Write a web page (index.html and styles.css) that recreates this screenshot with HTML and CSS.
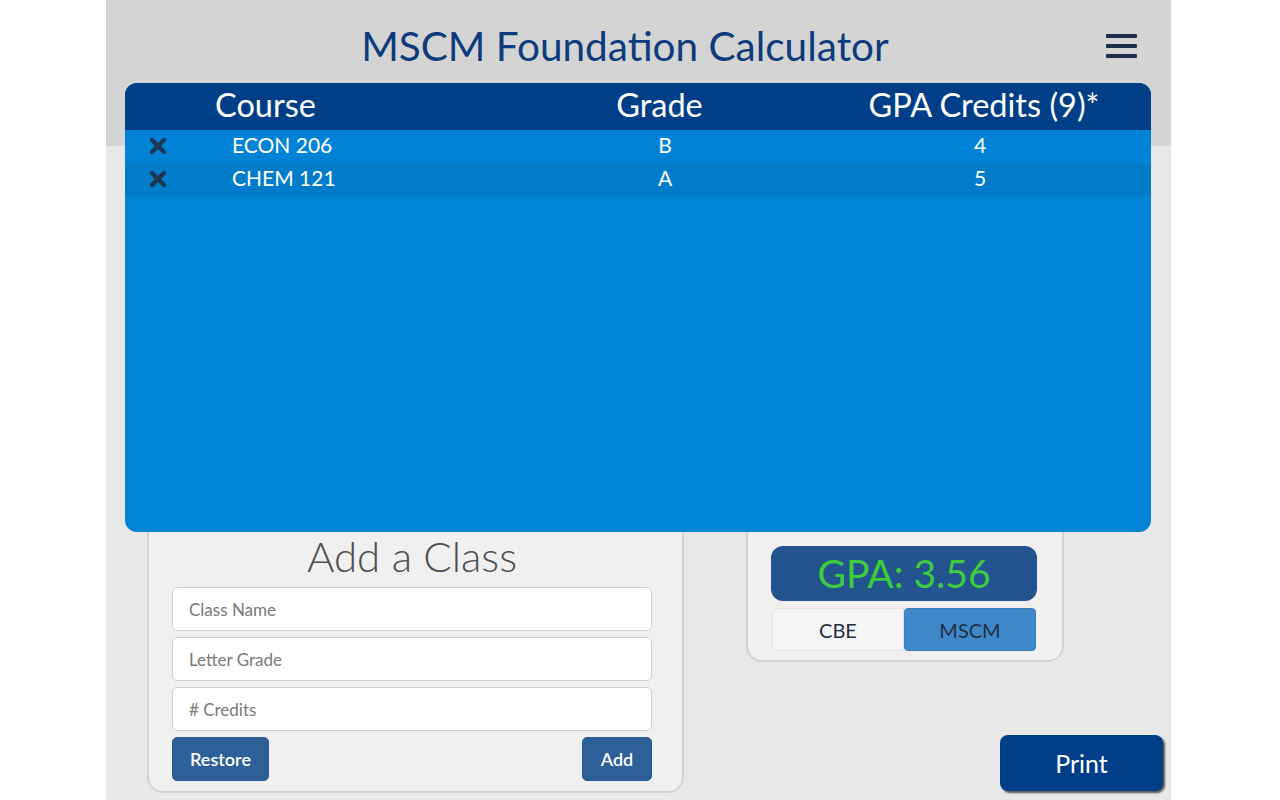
FILE: index.html
```html
<!DOCTYPE html>
<html lang="en">
<head>
<meta charset="utf-8">
<title>MSCM Foundation Calculator</title>
<link rel="stylesheet" href="styles.css">
</head>
<body>
<div class="app">
  <header class="topbar">
    <h1 class="title">MSCM Foundation Calculator</h1>
    <button class="menu" aria-label="Menu">
      <span class="bar"></span><span class="bar"></span><span class="bar"></span>
    </button>
  </header>

  <section class="table">
    <div class="thead">
      <div class="th th-x"></div>
      <div class="th th-course">Course</div>
      <div class="th th-grade">Grade</div>
      <div class="th th-credits">GPA Credits (9)*</div>
    </div>
    <div class="tbody">
      <div class="tr">
        <div class="td td-x"><svg class="xicon" viewBox="0 0 20 20"><path d="M4 4 L16 16 M16 4 L4 16" /></svg></div>
        <div class="td td-course">ECON 206</div>
        <div class="td td-grade">B</div>
        <div class="td td-credits">4</div>
      </div>
      <div class="tr alt">
        <div class="td td-x"><svg class="xicon" viewBox="0 0 20 20"><path d="M4 4 L16 16 M16 4 L4 16" /></svg></div>
        <div class="td td-course">CHEM 121</div>
        <div class="td td-grade">A</div>
        <div class="td td-credits">5</div>
      </div>
    </div>
  </section>

  <section class="bottom">
    <div class="panel add-panel">
      <h2 class="add-title">Add a Class</h2>
      <input class="field" type="text" placeholder="Class Name">
      <input class="field" type="text" placeholder="Letter Grade">
      <input class="field" type="text" placeholder="# Credits">
      <div class="actions">
        <button class="btn btn-restore">Restore</button>
        <button class="btn btn-add">Add</button>
      </div>
    </div>
    <div class="right-col">
      <div class="panel gpa-panel">
        <div class="gpa-box">GPA: 3.56</div>
        <div class="toggle">
          <button class="seg seg-off">CBE</button>
          <button class="seg seg-on">MSCM</button>
        </div>
      </div>
      <button class="print">Print</button>
    </div>
  </section>
</div>
</body>
</html>
```

FILE: styles.css
```css
html, body {
  margin: 0;
  padding: 0;
  background: #ffffff;
}

body {
  font-family: Lato, "Open Sans", "Liberation Sans", sans-serif;
}

.app {
  width: 1065px;
  margin-left: 106px;
  height: 800px;
  overflow: hidden;
  background: linear-gradient(#d4d4d4 0, #d4d4d4 146px, #e8e8e8 146px, #e8e8e8 100%);
  display: flex;
  flex-direction: column;
}

/* header */
.topbar {
  height: 83px;
  box-sizing: border-box;
  display: flex;
  align-items: flex-start;
  padding: 22px 34px 0 38px;
}

.title {
  flex: 1;
  margin: 0;
  text-align: center;
  font-weight: 400;
  font-size: 40.5px;
  line-height: 48px;
  color: #0d3b7c;
}

.menu {
  width: 31px;
  height: 24px;
  margin-top: 12px;
  padding: 0;
  border: 0;
  background: transparent;
  display: flex;
  flex-direction: column;
  justify-content: space-between;
}

.bar {
  display: block;
  height: 4px;
  width: 31px;
  background: #1b2f4a;
  border-radius: 1px;
}

/* table */
.table {
  margin: 0 20px 0 19px;
  height: 449px;
  border-radius: 12px;
  overflow: hidden;
  background: #0085d6;
  display: flex;
  flex-direction: column;
}

.thead, .tr {
  display: grid;
  grid-template-columns: 90px 285px 325px 325px;
  align-items: center;
}

.thead {
  height: 47px;
  background: #003f88;
  color: #ffffff;
  font-size: 32.5px;
}

.th {
  line-height: 44px;
  padding-bottom: 4px;
}

.th-course { text-align: left; }
.th-grade { text-align: center; padding-right: 6px; }
.th-credits { text-align: center; padding-right: 7px; }

.tr {
  height: 33px;
  background: #0083d6;
  color: #ffffff;
  font-size: 21px;
}

.tr.alt {
  background: #007ccb;
}

.td {
  line-height: 29px;
  padding-bottom: 4px;
}

.td-x {
  display: flex;
  align-items: center;
  padding-left: 23px;
  padding-bottom: 2px;
}

.xicon {
  width: 20px;
  height: 20px;
}

.xicon path {
  stroke: #1c3654;
  stroke-width: 4.4;
  stroke-linecap: round;
  fill: none;
}

.td-course { padding-left: 17px; }
.td-grade { text-align: center; padding-left: 5px; }
.td-credits { text-align: center; padding-right: 15px; }

/* bottom */
.bottom {
  display: flex;
  align-items: flex-start;
  padding-left: 41px;
}

.panel {
  background: #f0f0f0;
  border: 2px solid #d2d2d2;
  border-top: 0;
  border-radius: 0 0 16px 16px;
  box-sizing: border-box;
}

.add-panel {
  width: 537px;
  padding: 0 30px 10px 23px;
  display: flex;
  flex-direction: column;
}

.add-title {
  margin: 0;
  text-align: center;
  font-weight: 300;
  font-size: 42px;
  line-height: 49px;
  color: #4e4e4e;
}

.field {
  display: block;
  height: 44px;
  box-sizing: border-box;
  margin-top: 6px;
  padding: 0 16px;
  border: 1px solid #cfcfcf;
  border-radius: 5px;
  background: #ffffff;
  font-family: inherit;
  font-size: 17px;
  color: #333;
}

.field::placeholder {
  color: #7a7a7a;
}

.actions {
  display: flex;
  justify-content: space-between;
  margin-top: 6px;
}

.btn {
  height: 44px;
  border: 1px solid #2a5a90;
  border-radius: 5px;
  background: #2d5f98;
  color: #ffffff;
  font-family: inherit;
  font-size: 18px;
  font-weight: 600;
  padding: 0;
}

.btn-restore { width: 97px; }
.btn-add { width: 70px; }

.right-col {
  margin-left: 62px;
  width: 417px;
  display: flex;
  flex-direction: column;
}

.gpa-panel {
  width: 318px;
  padding: 14px 25px 9px 23px;
}

.gpa-box {
  height: 55px;
  border-radius: 12px;
  background: #24548f;
  color: #3ccc3c;
  font-size: 39px;
  line-height: 55px;
  text-align: center;
}

.toggle {
  margin-top: 7px;
  display: flex;
  height: 43px;
  margin-left: 1px;
  margin-right: 1px;
}

.seg {
  flex: 1;
  border: 1px solid #e2e2e2;
  font-family: inherit;
  font-size: 20px;
  color: #1f2f45;
  padding: 0;
}

.seg-off {
  background: #f5f5f5;
  border-radius: 4px 0 0 4px;
}

.seg-on {
  background: #3f88c9;
  border-color: #3a80c0;
  border-radius: 4px;
}

.print {
  align-self: flex-end;
  margin-top: 73px;
  margin-right: 0;
  width: 163px;
  height: 56px;
  border: 0;
  border-radius: 8px;
  background: #003f88;
  color: #ffffff;
  font-family: inherit;
  font-size: 25px;
  box-shadow: 2px 2px 2px #555;
}
```
